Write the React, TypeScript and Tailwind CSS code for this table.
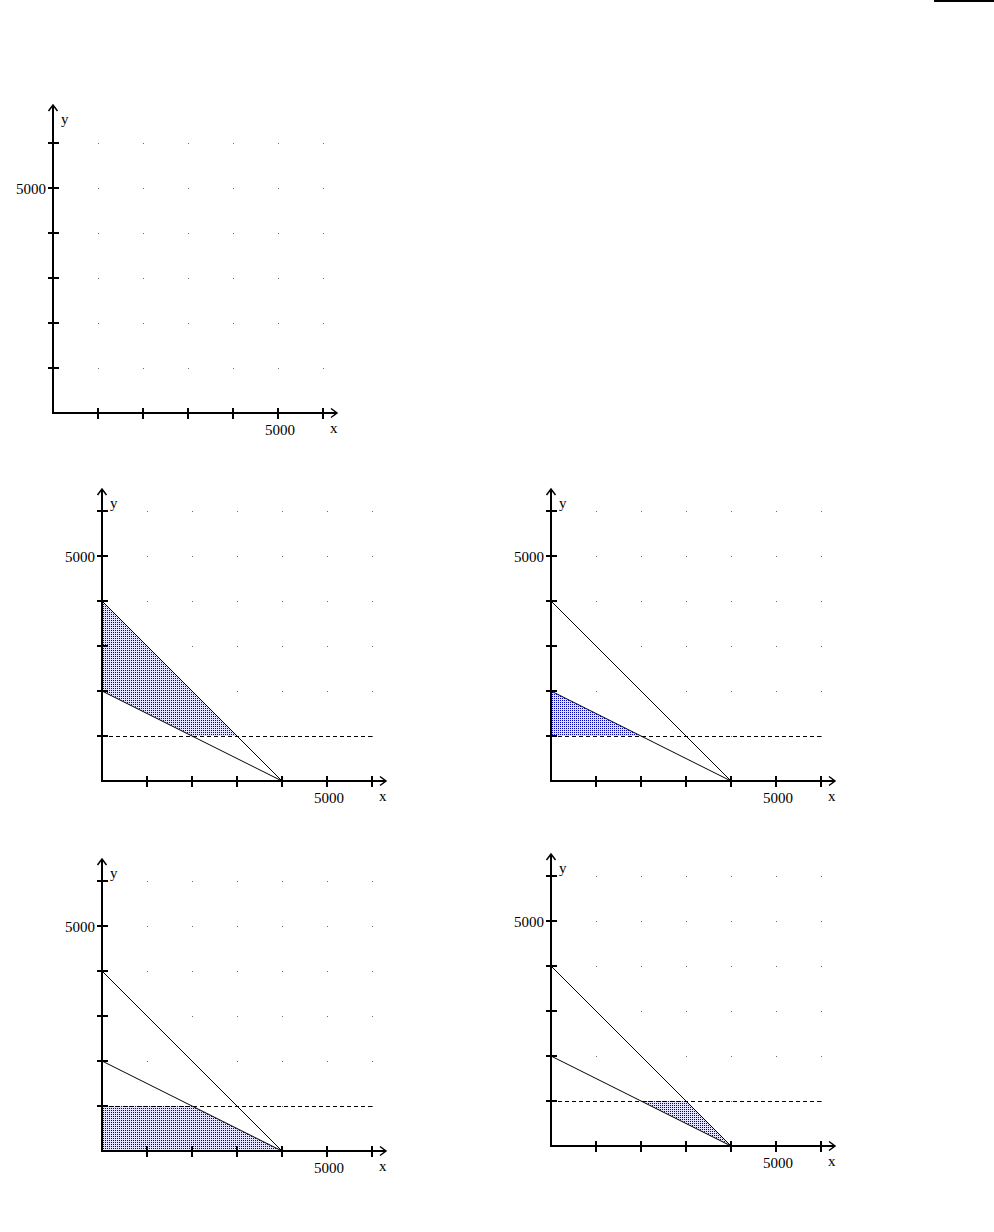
import React, { useId } from "react";

type Pt = [number, number];

const OX = 53;
const OY = 315;
const U = 45;

function Graph({ shade, lines = true, top = 292 }: { shade?: Pt[]; lines?: boolean; top?: number }) {
  const id = useId().replace(/:/g, "");
  const px = (x: number) => OX + (x / 1000) * U;
  const py = (y: number) => OY - (y / 1000) * U;
  const tipY = OY - top;
  const tipX = OX + 284;
  const dots: React.ReactNode[] = [];
  for (let i = 1; i <= 6; i++) {
    for (let j = 1; j <= 6; j++) {
      dots.push(<rect key={`${i}-${j}`} x={OX + U * i} y={OY - U * j} width={1} height={1} fill="#6b6b6b" />);
    }
  }
  return (
    <svg width={345} height={345} viewBox="0 0 345 345" className="block" style={{ fontFamily: '"Liberation Serif", "Times New Roman", serif' }}>
      <defs>
        <pattern id={`p${id}`} width={2} height={2} patternUnits="userSpaceOnUse">
          <rect width={2} height={2} fill="#e2e2ff" />
          <rect width={1} height={1} fill="#0000b0" />
        </pattern>
      </defs>
      {dots}
      {shade && <polygon points={shade.map(([x, y]) => `${px(x)},${py(y)}`).join(" ")} fill={`url(#p${id})`} />}
      {lines && (
        <g stroke="#000" strokeWidth={1} fill="none">
          <line x1={px(0)} y1={py(4000)} x2={px(4000)} y2={py(0)} />
          <line x1={px(0)} y1={py(2000)} x2={px(4000)} y2={py(0)} />
          <line x1={px(0)} y1={py(1000) + 0.5} x2={px(6000)} y2={py(1000) + 0.5} strokeDasharray="4 3" />
        </g>
      )}
      <g stroke="#000" fill="none">
        <line x1={OX} y1={OY + 1} x2={OX} y2={tipY} strokeWidth={2} />
        <line x1={OX - 1} y1={OY} x2={tipX} y2={OY} strokeWidth={2} />
        <polyline points={`${OX - 4.5},${tipY + 6} ${OX},${tipY} ${OX + 4.5},${tipY + 6}`} strokeWidth={1.5} />
        <polyline points={`${tipX - 6},${OY - 4.5} ${tipX},${OY} ${tipX - 6},${OY + 4.5}`} strokeWidth={1.5} />
        {[1, 2, 3, 4, 5, 6].map((i) => (
          <line key={`xt${i}`} x1={OX + U * i} y1={OY - 5} x2={OX + U * i} y2={OY + 6} strokeWidth={2} />
        ))}
        {[1, 2, 3, 4, 5, 6].map((j) => (
          <line key={`yt${j}`} x1={OX - 5} y1={OY - U * j} x2={OX + 6} y2={OY - U * j} strokeWidth={2} />
        ))}
      </g>
      <g fill="#000" fontSize={15}>
        <text x={OX + 8} y={tipY + 19}>y</text>
        <text x={tipX - 7} y={OY + 20}>x</text>
        <text x={OX - 7} y={OY - 5 * U + 6} textAnchor="end">5000</text>
        <text x={OX + 5 * U + 2} y={OY + 22} textAnchor="middle">5000</text>
      </g>
    </svg>
  );
}

export default function App() {
  return (
    <div className="w-[994px] h-[1232px] bg-white overflow-hidden">
      <div className="flex justify-end">
        <div className="w-[60px] h-[2px] bg-black" />
      </div>
      <div className="mt-[96px]">
        <Graph lines={false} top={308} />
      </div>
      <div className="flex items-start mt-[23px]">
        <div className="ml-[49px]">
          <Graph shade={[[0, 4000], [0, 2000], [2000, 1000], [3000, 1000]]} />
        </div>
        <div className="ml-[104px]">
          <Graph shade={[[0, 2000], [0, 1000], [2000, 1000]]} />
        </div>
      </div>
      <div className="flex items-start mt-[20px]">
        <div className="ml-[49px] mt-[5px]">
          <Graph shade={[[0, 0], [0, 1000], [2000, 1000], [4000, 0]]} />
        </div>
        <div className="ml-[104px]">
          <Graph shade={[[2000, 1000], [3000, 1000], [4000, 0]]} />
        </div>
      </div>
    </div>
  );
}
